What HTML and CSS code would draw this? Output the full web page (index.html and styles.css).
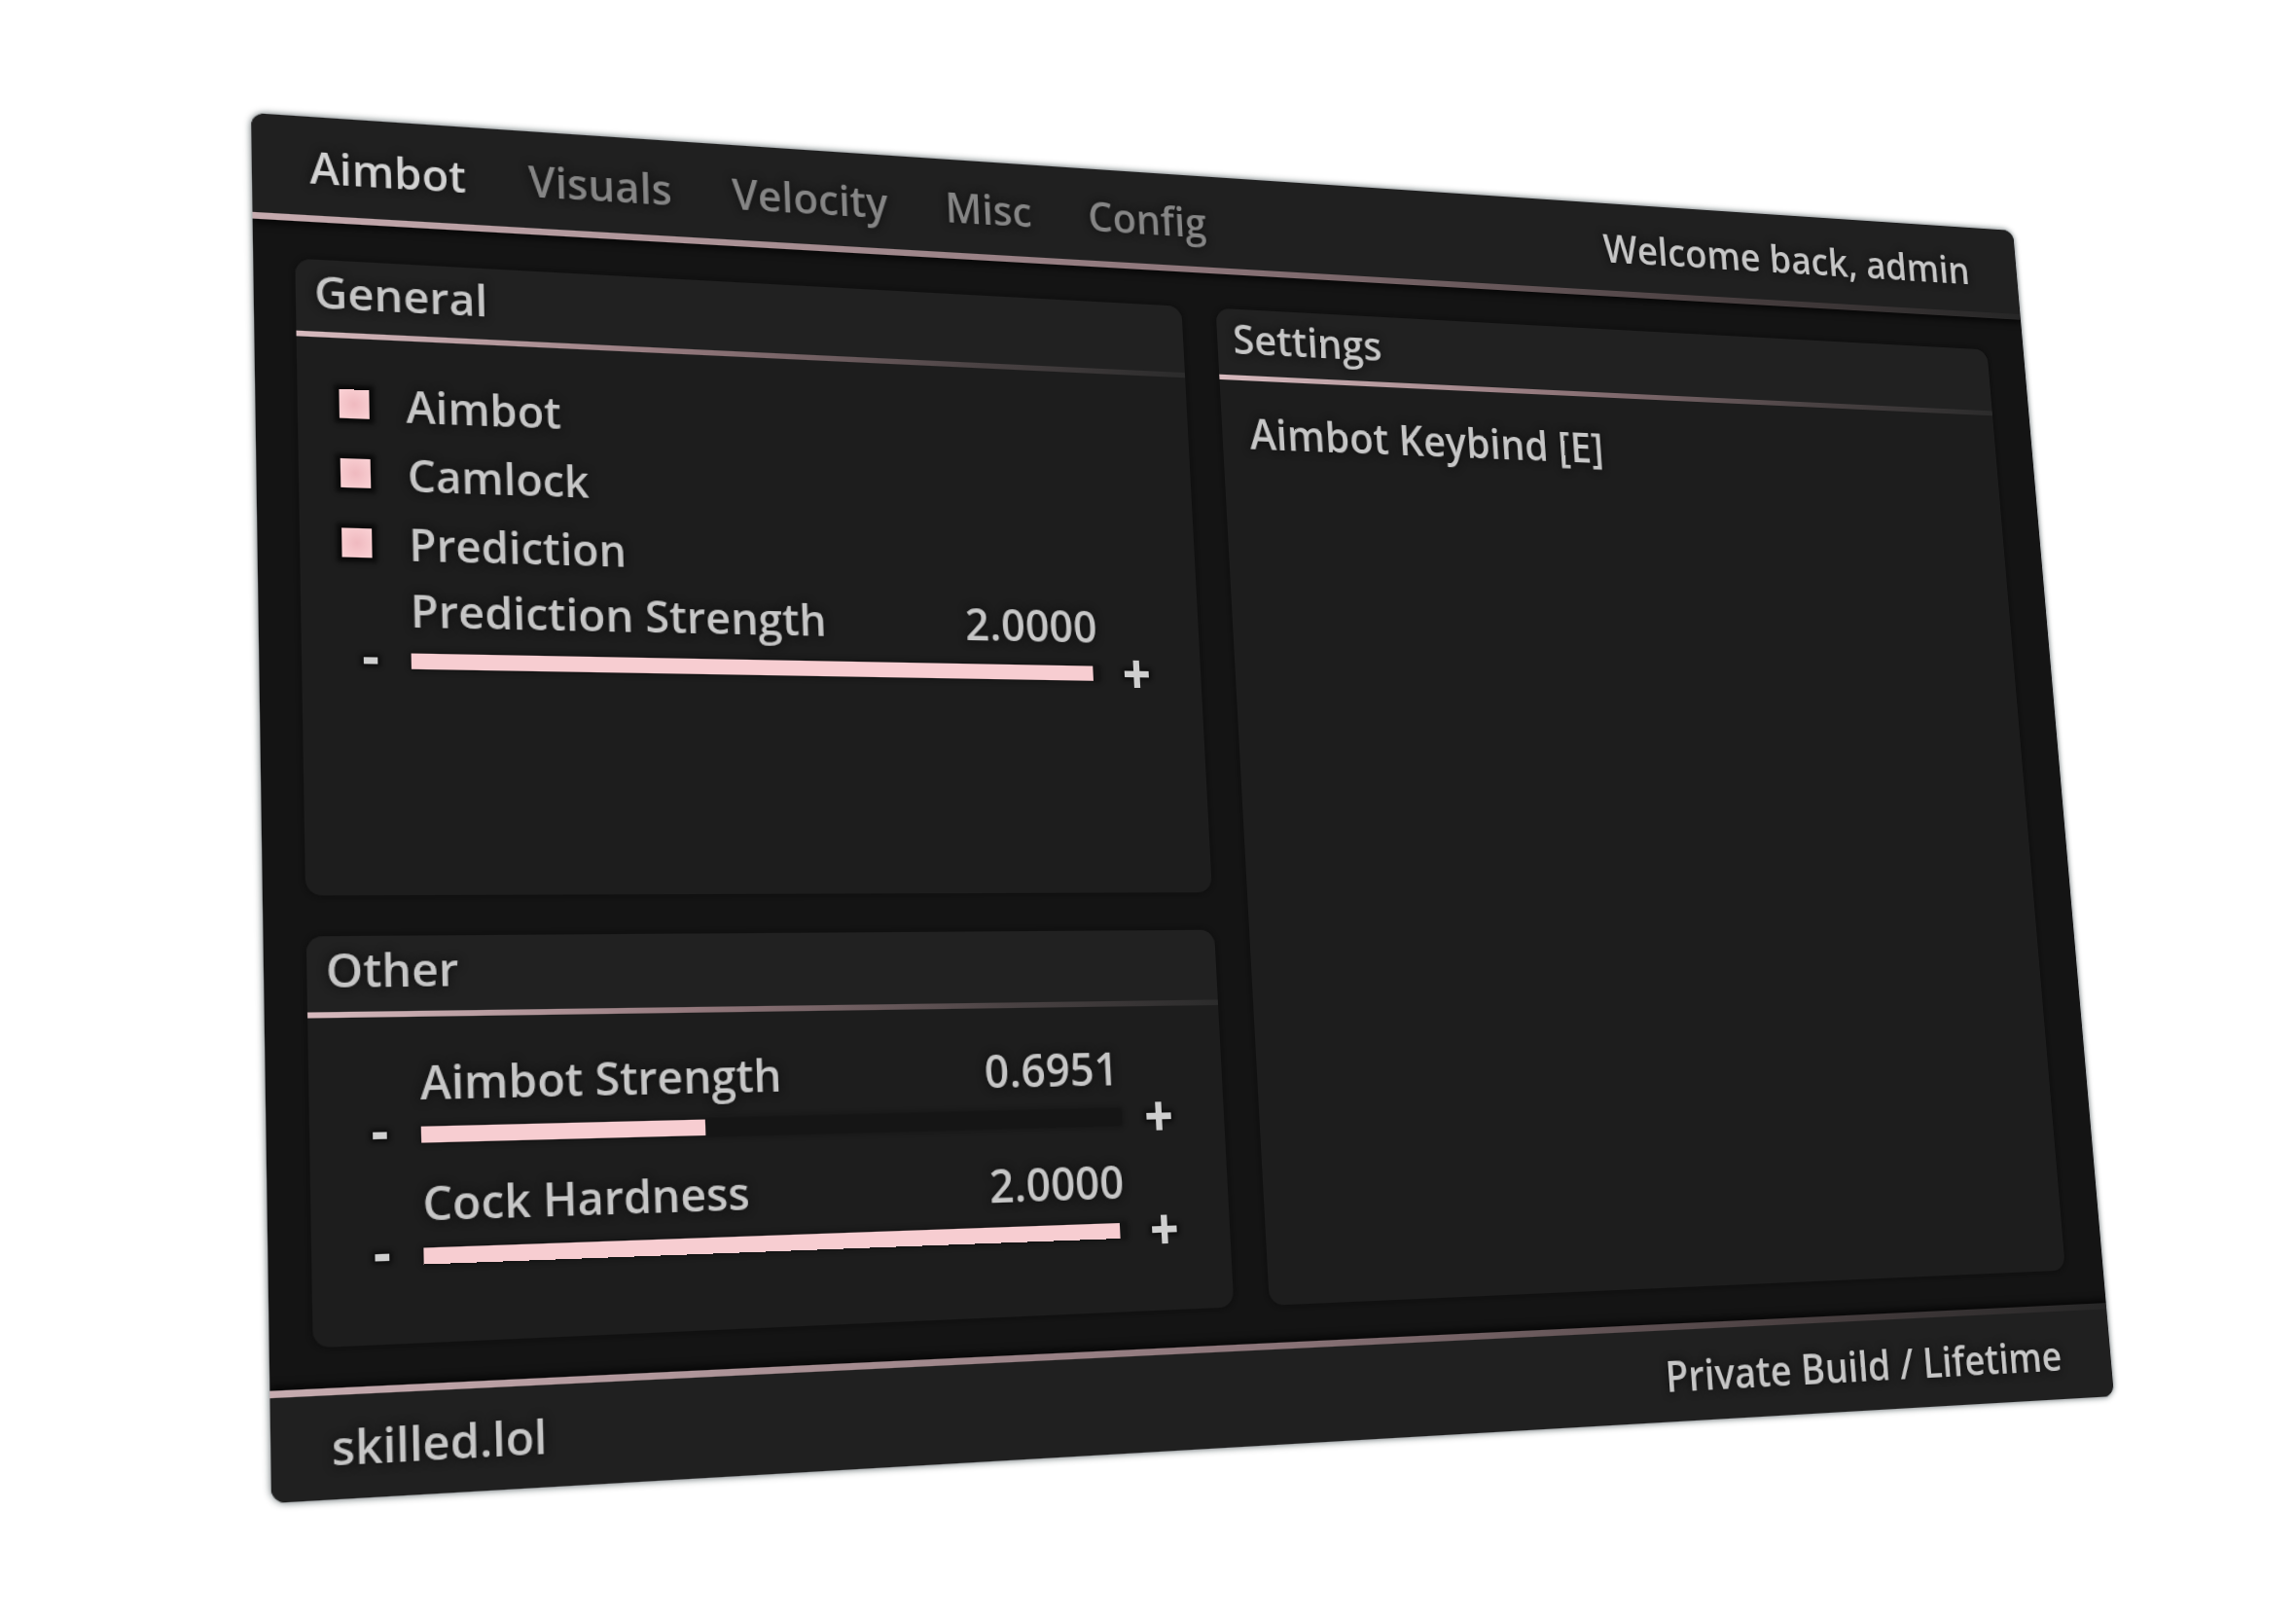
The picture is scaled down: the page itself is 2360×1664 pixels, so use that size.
FILE: index.html
```html
<!DOCTYPE html>
<html lang="en">

<head>
    <meta charset="UTF-8" />
    <meta name="viewport" content="width=device-width, initial-scale=1.0" />
    <title>skilled.lol</title>
    <link rel="stylesheet" href="styles.css">
</head>

<body>
    <div class="window">
        <header class="bar top-bar">
            <nav class="tabs">
                <button type="button" class="active">Aimbot</button>
                <button type="button">Visuals</button>
                <button type="button">Velocity</button>
                <button type="button">Misc</button>
                <button type="button">Config</button>
            </nav>
            <span>Welcome back, admin</span>
        </header>

        <main class="panels">
            <section class="panel general">
                <h2>General</h2>
                <div class="panel-body">
                    <label class="check"><input type="checkbox" checked> Aimbot</label>
                    <label class="check"><input type="checkbox" checked> Camlock</label>
                    <label class="check"><input type="checkbox" checked> Prediction</label>
                    <div class="slider">
                        <div class="slider-text">
                            <label for="prediction-strength">Prediction Strength</label>
                            <output for="prediction-strength">2.0000</output>
                        </div>
                        <button type="button" class="minus" aria-label="Decrease"></button>
                        <input type="range" id="prediction-strength" min="0" max="2" step="0.0001" value="2" style="--fill: 99%">
                        <button type="button" class="plus" aria-label="Increase"></button>
                    </div>
                </div>
            </section>

            <section class="panel settings">
                <h2>Settings</h2>
                <div class="panel-body">
                    <button type="button" class="keybind">Aimbot Keybind [E]</button>
                </div>
            </section>

            <section class="panel other">
                <h2>Other</h2>
                <div class="panel-body">
                    <div class="slider">
                        <div class="slider-text">
                            <label for="aimbot-strength">Aimbot Strength</label>
                            <output for="aimbot-strength">0.6951</output>
                        </div>
                        <button type="button" class="minus" aria-label="Decrease"></button>
                        <input type="range" id="aimbot-strength" min="0" max="2" step="0.0001" value="0.6951" style="--fill: 39%">
                        <button type="button" class="plus" aria-label="Increase"></button>
                    </div>
                    <div class="slider">
                        <div class="slider-text">
                            <label for="cock-hardness">Cock Hardness</label>
                            <output for="cock-hardness">2.0000</output>
                        </div>
                        <button type="button" class="minus" aria-label="Decrease"></button>
                        <input type="range" id="cock-hardness" min="0" max="2" step="0.0001" value="2" style="--fill: 99%">
                        <button type="button" class="plus" aria-label="Increase"></button>
                    </div>
                </div>
            </section>
        </main>

        <footer class="bar bottom-bar">
            <span>skilled.lol</span>
            <span>Private Build / Lifetime</span>
        </footer>
    </div>
</body>

</html>
```
FILE: styles.css
```css
* {
    box-sizing: border-box;
}

body {
    min-height: 100vh;
    margin: 0;
    padding: 116px 302px 0 258px;
    background: #ffffff;
    color: #c6c6c6;
    font-family: "Open Sans", "Noto Sans", sans-serif;
    font-size: 40px;
    font-weight: 600;
    line-height: 46px;
}

button {
    padding: 0;
    border: none;
    background: none;
    color: inherit;
    font: inherit;
    text-shadow: inherit;
    cursor: pointer;
}

/* the whole menu is tilted back to the right */
.window {
    display: flex;
    flex-direction: column;
    min-height: calc(100vh - 464px);
    background: #141414;
    border-radius: 12px;
    box-shadow: 0 0 6px rgba(10, 25, 30, 0.7);
    overflow: hidden;
    text-shadow: 0 0 8px #0c0c0c;
    transform-origin: 0 0;
    transform: matrix3d(1.19511, 0.07985, 0, 0.000104361,
                        0.016553, 1.12637, 0, -0.000045115,
                        0, 0, 1, 0,
                        0, 0, 0, 1);
}

.bar {
    display: flex;
    justify-content: space-between;
    align-items: center;
    padding: 0 57px 0 50px;
    background: #202020;
}

.top-bar {
    height: 96px;
    padding-top: 2px;
    border-bottom: 6px solid;
    border-image: linear-gradient(to right, #c6abaf, #8b7478 50%, #4a4041 80%, #262626) 1;
    box-shadow: 0 3px 6px #060606;
}

.bottom-bar {
    height: 92px;
    border-top: 6px solid;
    border-image: linear-gradient(to right, #c6abaf, #8b7478 50%, #4a4041 80%, #262626) 1;
    box-shadow: 0 -3px 6px #060606;
}

.tabs {
    display: flex;
    gap: 56px;
    color: #858585;
    font-size: 39px;
}

.tabs .active {
    color: #d2d2d2;
}

.panels {
    flex: 1;
    display: grid;
    grid-template-columns: 830fr 855fr;
    grid-template-rows: 563fr 347fr;
    gap: 35px;
    padding: 34px 44px 34px 36px;
}

.panel {
    background: #1d1d1d;
    border-radius: 14px;
    box-shadow: 0 0 5px #0c0c0c;
}

.settings {
    grid-column: 2;
    grid-row: 1 / 3;
}

.panel h2 {
    margin: 0;
    padding: 6px 16px 13px;
    background: #212121;
    border-bottom: 5px solid;
    border-image: linear-gradient(to right, #d8bbbf, #94797d 40%, #4b4344 75%, #2b2b2b) 1;
    border-radius: 14px 14px 0 0;
    font-size: inherit;
    font-weight: inherit;
}

.panel-body {
    padding: 28px 39px 28px 36px;
}

.settings .panel-body {
    padding: 28px;
}

.keybind,
.slider output {
    font-size: 41px;
}

.check {
    display: flex;
    align-items: center;
    gap: 32px;
    height: 62px;
    font-size: 39px;
}

.check input {
    appearance: none;
    width: 26px;
    height: 26px;
    margin: 0;
    background: #141414;
    box-shadow: 0 0 4px 4px #0a0a0a;
}

.check input:checked {
    background: radial-gradient(#efb9bf, #fbd3d6);
}

.slider {
    display: grid;
    grid-template-columns: 46px 1fr 50px;
    grid-template-rows: 56px 34px;
    column-gap: 12px;
    align-items: center;
    margin-bottom: 13px;
}

.slider-text {
    grid-column: 2;
    display: flex;
    justify-content: space-between;
}

.minus {
    grid-column: 1;
}

.minus,
.plus {
    position: relative;
    height: 34px;
}

.minus::before,
.plus::before,
.plus::after {
    content: "";
    position: absolute;
    inset: 0;
    width: 12px;
    height: 6px;
    margin: auto;
    background: #cfcfcf;
    box-shadow: 0 0 4px 2px #0a0a0a;
}

.plus::before {
    width: 24px;
}

.plus::after {
    width: 6px;
    height: 26px;
    box-shadow: none;
}

.slider input {
    appearance: none;
    width: 100%;
    height: 14px;
    margin: 0;
    background: linear-gradient(to right, #f7cdd1 var(--fill), #151515 var(--fill));
    box-shadow: 0 0 4px 1px #111111;
}

.slider input::-webkit-slider-thumb {
    appearance: none;
    width: 1px;
    height: 14px;
}
```
